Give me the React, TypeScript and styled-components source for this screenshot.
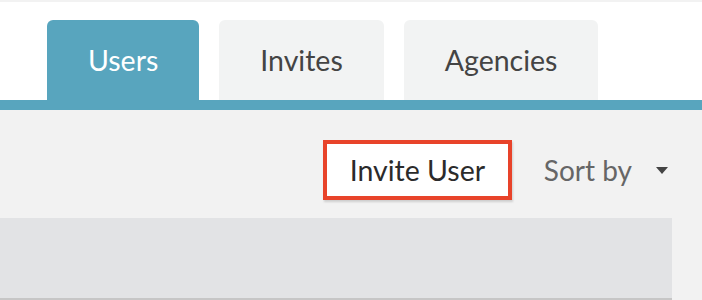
import { FC } from "react"
import styled, { createGlobalStyle } from "styled-components"

const GlobalStyle = createGlobalStyle`
  html, body {
    margin: 0;
    padding: 0;
    background: #ffffff;
    font-family: Lato, "Liberation Sans", sans-serif;
  }
`

const TopStrip = styled.div`
  height: 2px;
  background: #f2f2f2;
`

const TabBar = styled.nav`
  display: flex;
  align-items: flex-end;
  gap: 20px;
  padding: 18px 0 0 47px;
  border-bottom: 10px solid #58a5be;
`

const Tab = styled.button<{ active?: boolean }>`
  height: 80px;
  padding: 0 41px;
  border: 0;
  border-radius: 6px 6px 0 0;
  background: ${({ active }) => (active ? "#58a5be" : "#f2f3f3")};
  color: ${({ active }) => (active ? "#ffffff" : "#444444")};
  font-family: inherit;
  font-size: 28.5px;
  font-weight: 400;
  cursor: pointer;
`

const Panel = styled.section`
  background: #f2f2f2;
  padding-top: 30px;
  height: 190px;
  box-sizing: border-box;
`

const Toolbar = styled.div`
  display: flex;
  align-items: center;
  justify-content: flex-end;
  padding-right: 34px;
  height: 60px;
`

const InviteButton = styled.button`
  height: 60px;
  width: 189px;
  box-sizing: border-box;
  border: 4px solid #e8432a;
  background: #ffffff;
  color: #2b2b2b;
  font-family: inherit;
  font-size: 28.5px;
  box-shadow: 1px 2px 2px rgba(0, 0, 0, 0.15);
  cursor: pointer;
`

const SortBy = styled.div`
  display: flex;
  align-items: center;
  gap: 24px;
  margin-left: 32px;
  color: #666666;
  font-size: 28px;
`

const Caret = styled.span`
  width: 0;
  height: 0;
  border-left: 6.5px solid transparent;
  border-right: 6.5px solid transparent;
  border-top: 7.5px solid #444444;
`

const TableHead = styled.div`
  margin-top: 18px;
  width: 672px;
  height: 80px;
  background: #e2e3e5;
  border-bottom: 2px solid #c6c6c6;
  box-sizing: content-box;
`

const tabs = ["Users", "Invites", "Agencies"]

const App: FC = () => (
  <>
    <GlobalStyle />
    <TopStrip />
    <TabBar>
      {tabs.map((t, i) => (
        <Tab key={t} active={i === 0}>
          {t}
        </Tab>
      ))}
    </TabBar>
    <Panel>
      <Toolbar>
        <InviteButton>Invite User</InviteButton>
        <SortBy>
          Sort by
          <Caret />
        </SortBy>
      </Toolbar>
      <TableHead />
    </Panel>
  </>
)

export default App
